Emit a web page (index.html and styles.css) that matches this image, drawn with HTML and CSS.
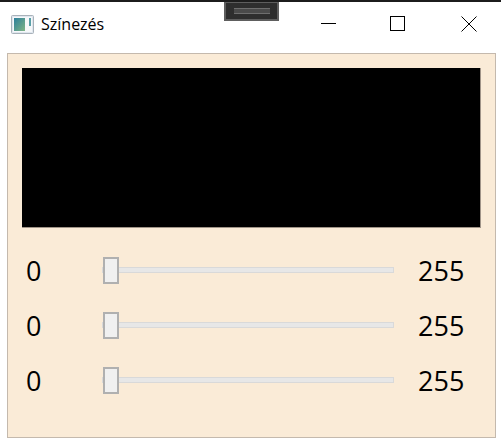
FILE: index.html
```html
<!DOCTYPE html>
<html lang="en">
<head>
  <meta charset="UTF-8" />
  <title>Színezés</title>
  <link rel="stylesheet" href="styles.css">
</head>
<body>

<div class="window">
  <div class="snap-handle"><span class="snap-lines"></span></div>

  <div class="titlebar">
    <svg class="app-icon" width="23" height="19" viewBox="0 0 23 19">
      <defs>
        <linearGradient id="appFill" x1="0" y1="0" x2="1" y2="1">
          <stop offset="0" stop-color="#2c7f9c" />
          <stop offset="1" stop-color="#7fb585" />
        </linearGradient>
      </defs>
      <rect x="0.5" y="0.5" width="22" height="18" rx="1" fill="#dfe6ee" stroke="#a9b2ba" />
      <rect x="2" y="2" width="19" height="15" fill="#f6f8fa" />
      <rect x="3" y="3" width="11" height="13" fill="url(#appFill)" />
      <rect x="18" y="3" width="2" height="8" fill="#5aa0a8" />
    </svg>
    <span class="title">Színezés</span>

    <div class="controls">
      <svg class="control" width="16" height="16" viewBox="0 0 16 16">
        <path d="M0 7.5h15" stroke="#000" fill="none" />
      </svg>
      <svg class="control" width="18" height="16" viewBox="0 0 18 16">
        <rect x="0.5" y="0.5" width="14" height="14" stroke="#000" fill="none" />
      </svg>
      <svg class="control" width="16" height="16" viewBox="0 0 16 16">
        <path d="M0.5 0.5l15 15M15.5 0.5l-15 15" stroke="#000" fill="none" />
      </svg>
    </div>
  </div>

  <div class="panel">
    <div class="preview"></div>

    <div class="sliders">
      <div class="slider-row">
        <span class="min">0</span>
        <input type="range" min="0" max="255" value="0">
        <span class="max">255</span>
      </div>
      <div class="slider-row">
        <span class="min">0</span>
        <input type="range" min="0" max="255" value="0">
        <span class="max">255</span>
      </div>
      <div class="slider-row">
        <span class="min">0</span>
        <input type="range" min="0" max="255" value="0">
        <span class="max">255</span>
      </div>
    </div>
  </div>
</div>

</body>
</html>
```

FILE: styles.css
```css
html, body {
  margin: 0;
  padding: 0;
  background: #fff;
}

.window {
  position: relative;
  width: 501px;
  height: 443px;
  overflow: hidden;
  border-top: 2px solid #1c1c1c;
  box-sizing: border-box;
  background: #fff;
  font-family: "Open Sans", "Noto Sans", sans-serif;
  color: #000;
}

.snap-handle {
  position: absolute;
  top: -1px;
  left: 224px;
  width: 55px;
  height: 20px;
  box-sizing: border-box;
  border: 2px solid #5e5e5e;
  background: #2e2e2e;
  display: flex;
  align-items: center;
  justify-content: center;
}

.snap-lines {
  display: block;
  width: 36px;
  height: 4px;
  border-top: 1px solid #6e6e6e;
  border-bottom: 1px solid #6e6e6e;
  background: #4a4a4a;
}

.titlebar {
  display: flex;
  align-items: center;
  height: 51px;
  padding: 0 24px 7px 11px;
  box-sizing: border-box;
}

.app-icon {
  flex: none;
  margin-right: 7px;
}

.title {
  font-size: 16px;
}

.controls {
  display: flex;
  margin-left: auto;
  gap: 53px;
}

.control {
  display: block;
}

.panel {
  margin: 0 5px 0 7px;
  height: 385px;
  box-sizing: border-box;
  border: 1px solid #c4b9ad;
  background: #faebd7;
  padding: 14px 14px 0 14px;
}

.preview {
  height: 159px;
  background: #000;
  border-bottom: 1px solid #a09488;
  border-right: 1px solid #a09488;
}

.sliders {
  display: flex;
  flex-direction: column;
  gap: 28px;
  margin-top: 28px;
}

.slider-row {
  display: flex;
  align-items: center;
  height: 27px;
  font-size: 27px;
  line-height: 29px;
}

.min {
  width: 80px;
  padding: 2px 0 0 4px;
  box-sizing: border-box;
}

.max {
  margin-left: 24px;
  padding-top: 2px;
}

input[type=range] {
  -webkit-appearance: none;
  appearance: none;
  display: block;
  width: 292px;
  height: 27px;
  margin: 0;
  background: transparent;
}

input[type=range]::-webkit-slider-runnable-track {
  height: 6px;
  box-sizing: border-box;
  border: 1px solid #d9d9d9;
  background: #e7e7e7;
}

input[type=range]::-webkit-slider-thumb {
  -webkit-appearance: none;
  width: 16px;
  height: 27px;
  margin-top: -11px;
  box-sizing: border-box;
  border: 2px solid #b0b0b0;
  background: #f0f0f0;
}
```
